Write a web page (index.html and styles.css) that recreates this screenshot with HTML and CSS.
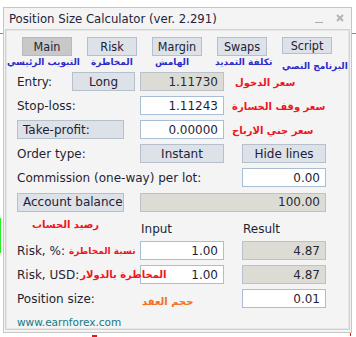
FILE: index.html
```html
<!DOCTYPE html>
<html lang="en">
<head>
<meta charset="utf-8">
<title>Position Size Calculator</title>
<link rel="stylesheet" href="styles.css">
</head>
<body>
<div class="mark mark-g1"></div>
<div class="mark mark-g2"></div>
<div class="mark mark-g3"></div>
<div class="mark mark-r1"></div>
<div class="mark mark-r2"></div>
<div class="window">
  <div class="titlebar">
    <span class="title">Position Size Calculator (ver. 2.291)</span>
    <span class="win-min"></span>
    <svg class="win-close" width="8" height="8" viewBox="0 0 8 8"><path d="M1 1 L7 7 M7 1 L1 7" stroke="#b4b4b4" stroke-width="2"/></svg>
  </div>
  <div class="client">
    <div class="tabs">
      <div class="tab"><div class="btn tab-btn active">Main</div><div class="ar-blue tl-main">التبويب الرئيسي</div></div>
      <div class="tab"><div class="btn tab-btn">Risk</div><div class="ar-blue tl-risk">المخاطرة</div></div>
      <div class="tab"><div class="btn tab-btn">Margin</div><div class="ar-blue tl-margin">الهامش</div></div>
      <div class="tab"><div class="btn tab-btn">Swaps</div><div class="ar-blue tl-swaps">تكلفة التمديد</div></div>
      <div class="tab"><div class="btn tab-btn">Script</div><div class="ar-blue tl-script">البرنامج النصي</div></div>
    </div>

    <div class="row">
      <div class="label c1">Entry:</div>
      <div class="btn c2">Long</div>
      <div class="field ro c4">1.11730</div>
      <div class="ar-red note note-entry c56">سعر الدخول</div>
    </div>
    <div class="row">
      <div class="label c13">Stop-loss:</div>
      <div class="field c4">1.11243</div>
      <div class="ar-red note c56">سعر وقف الخسارة</div>
    </div>
    <div class="row">
      <div class="btn btn-left wide c13">Take-profit:</div>
      <div class="field c4">0.00000</div>
      <div class="ar-red note c56">سعر جني الارباح</div>
    </div>
    <div class="row">
      <div class="label c13">Order type:</div>
      <div class="btn c4">Instant</div>
      <div class="btn c6">Hide lines</div>
    </div>
    <div class="row">
      <div class="label c14">Commission (one-way) per lot:</div>
      <div class="field c6">0.00</div>
    </div>
    <div class="row row-acc">
      <div class="btn btn-left wide c13">Account balance</div>
      <div class="field ro c46">100.00</div>
    </div>
    <div class="row row-head">
      <div class="ar-red note-acc c13">رصيد الحساب</div>
      <div class="head c4">Input</div>
      <div class="head c6">Result</div>
    </div>
    <div class="row">
      <div class="label-wrap c13"><span class="label">Risk, %:</span><span class="ar-red note-pct">نسبة المخاطرة</span></div>
      <div class="field c4">1.00</div>
      <div class="field ro c6">4.87</div>
    </div>
    <div class="row">
      <div class="field c4">1.00</div>
      <div class="label-wrap over c13"><span class="label">Risk, USD:</span><span class="ar-red note-usd">المخاطرة بالدولار</span></div>
      <div class="field ro c6">4.87</div>
    </div>
    <div class="row">
      <div class="label c13">Position size:</div>
      <div class="ar-orange note-pos c4">حجم العقد</div>
      <div class="field c6">0.01</div>
    </div>
    <div class="url">www.earnforex.com</div>
  </div>
</div>
</body>
</html>
```

FILE: styles.css
```css
html, body {
  margin: 0;
  padding: 0;
  background: #ffffff;
}
body {
  position: relative;
  width: 356px;
  height: 337px;
  overflow: hidden;
  font-family: "DejaVu Sans", sans-serif;
  font-size: 12px;
  color: #1f1f33;
}
.mark { position: absolute; }
.mark-g1 { left: 0; top: 33px; width: 3px; height: 1px; background: #22cc22; }
.mark-g2 { left: 352px; top: 33px; width: 4px; height: 1px; background: #22cc22; }
.mark-g3 { left: 0; top: 218px; width: 1px; height: 35px; background: #22ee22; }
.mark-r1 { left: 92px; top: 335px; width: 5px; height: 2px; background: #ee1111; }
.mark-r2 { left: 350px; top: 333px; width: 1px; height: 3px; background: #ee1111; }

.window {
  box-sizing: border-box;
  margin: 7px 0 0 3px;
  width: 349px;
  height: 326px;
  border: 1px solid #c6c6c6;
  background: #f4f4f4;
  display: flex;
  flex-direction: column;
}
.titlebar {
  height: 21px;
  display: flex;
  align-items: center;
  padding: 0 7px 0 5px;
}
.title {
  font-family: "DejaVu Sans Condensed", "DejaVu Sans", sans-serif;
  font-stretch: condensed;
  font-size: 13px;
  color: #23233b;
  flex: 1;
}
.win-min {
  width: 8px;
  height: 1px;
  background: #a8a8a8;
  margin: 8px 13px 0 0;
}
.win-close { margin-top: -2px; }

.client {
  flex: 1;
  margin: 0 1px 2px 1px;
  border: 1px solid #d2d2d2;
  box-shadow: inset 0 0 0 1px #e6e6e6;
  padding: 7px 0 0 11px;
  display: flex;
  flex-direction: column;
  gap: 5px;
}
.tabs {
  display: flex;
  gap: 15px;
  padding-left: 5px;
  height: 30px;
}
.tab {
  width: 50px;
  display: flex;
  flex-direction: column;
  align-items: flex-start;
}
.btn {
  box-sizing: border-box;
  height: 19px;
  border: 1px solid #b6bfcc;
  background: #dde1e8;
  display: flex;
  align-items: center;
  justify-content: center;
  color: #222236;
  white-space: nowrap;
}
.tab-btn {
  width: 50px;
  height: 20px;
  font-family: "DejaVu Sans Condensed", "DejaVu Sans", sans-serif;
  font-stretch: condensed;
  font-size: 12.5px;
}
.btn.active { background: #c8c8c8; border-color: #b9b9b9; }
.btn-left { justify-content: flex-start; padding-left: 5px; }
.wide { width: 107px; }

.ar-blue, .ar-red, .ar-orange {
  font-family: "DejaVu Sans", sans-serif;
  font-weight: bold;
  font-size: 10px;
  white-space: nowrap;
}
.ar-blue { color: #2b2bcc; margin-top: 1px; font-size: 9px; }
.ar-red { color: #ee1520; }
.ar-orange { color: #f07228; }
.tl-main { margin-left: -15px; }
.tl-risk { margin-left: 4px; }
.tl-margin { margin-left: 3px; }
.tl-swaps { margin-left: -2px; }
.tl-script { margin-top: 7px; margin-left: 0; }

.row {
  display: grid;
  grid-template-columns: 55px 63px 5px 84px 18px 84px;
  height: 19px;
  align-items: center;
}
.row-acc { height: 20px; }
.row-head { height: 18px; margin-top: 1px; }
.c1 { grid-column: 1; grid-row: 1; }
.c2 { grid-column: 2; grid-row: 1; height: 19px; }
.c13 { grid-column: 1 / 4; grid-row: 1; }
.c14 { grid-column: 1 / 5; grid-row: 1; }
.c4 { grid-column: 4; grid-row: 1; }
.c6 { grid-column: 6; grid-row: 1; }
.c46 { grid-column: 4 / 7; grid-row: 1; height: 20px; }
.c56 { grid-column: 5 / 7; grid-row: 1; }
.label { white-space: nowrap; }
.field {
  box-sizing: border-box;
  height: 19px;
  border: 1px solid #a9bdd4;
  background: #ffffff;
  display: flex;
  align-items: center;
  justify-content: flex-end;
  padding-right: 5px;
  color: #1f1f38;
}
.field.ro { background: #dddcd4; border-color: #b9c2cc; color: #2a2a3a; }
.note { padding-left: 8px; margin-top: 2px; }
.note-entry { padding-left: 11px; }
.note-acc { padding-left: 15px; align-self: end; margin-bottom: 6px; }
.head { padding-left: 1px; align-self: end; }
.label-wrap { display: flex; align-items: center; white-space: nowrap; }
.label-wrap.over { position: relative; z-index: 1; }
.note-pct { margin-left: 4px; font-size: 9px; }
.note-usd { margin-left: 1px; }
.note-pos { align-self: end; padding-left: 2px; margin-bottom: 1px; }
.url {
  margin-top: 3px;
  color: #137a87;
  font-size: 10.5px;
}
```
